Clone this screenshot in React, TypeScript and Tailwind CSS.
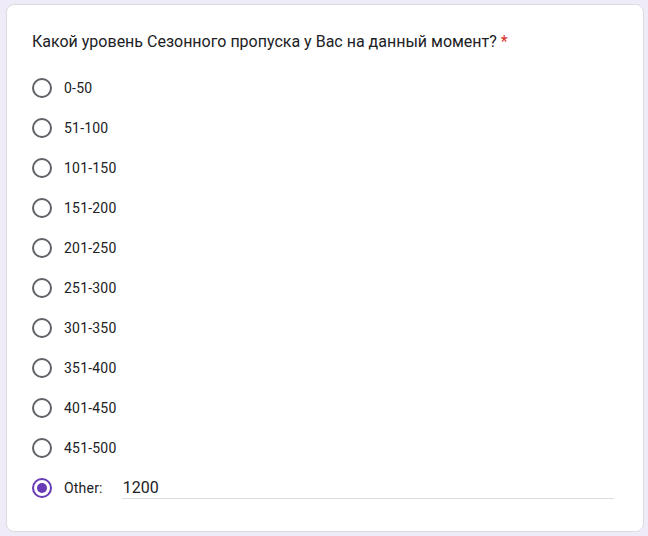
const options = [
  "0-50",
  "51-100",
  "101-150",
  "151-200",
  "201-250",
  "251-300",
  "301-350",
  "351-400",
  "401-450",
  "451-500",
];

function Radio({ checked }: { checked?: boolean }) {
  if (checked) {
    return (
      <div className="w-5 h-5 rounded-full border-2 border-[#673ab7] flex items-center justify-center shrink-0">
        <div className="w-[10px] h-[10px] rounded-full bg-[#673ab7]" />
      </div>
    );
  }
  return <div className="w-5 h-5 rounded-full border-2 border-[#5f6368] shrink-0" />;
}

export default function App() {
  return (
    <div
      className="w-[648px] h-[536px] bg-[#f0ebf8] pt-[4px] pl-[6px] overflow-hidden"
      style={{ fontFamily: "Roboto, Arial, sans-serif" }}
    >
      <div className="w-[638px] h-[528px] bg-white rounded-lg border border-[#dadce0] pt-[25px] pl-[25px]">
        <div className="text-[16px] leading-6 text-[#202124]">
          Какой уровень Сезонного пропуска у Вас на данный момент?{" "}
          <span className="text-[#d93025]">*</span>
        </div>
        <div className="mt-[14px] flex flex-col">
          {options.map((o) => (
            <div key={o} className="h-10 flex items-center gap-3">
              <Radio />
              <span className="text-[14px] text-[#202124] tracking-[0.2px]">{o}</span>
            </div>
          ))}
          <div className="h-10 flex items-center">
            <Radio checked />
            <span className="ml-3 text-[14px] text-[#202124] tracking-[0.2px]">Other:</span>
            <div className="ml-[19px] w-[492px] h-[22px] border-b border-[#dadce0] flex items-center self-start mt-[9px]">
              <span className="text-[16px] leading-5 text-[#202124] pl-[1px]">1200</span>
            </div>
          </div>
        </div>
      </div>
    </div>
  );
}
